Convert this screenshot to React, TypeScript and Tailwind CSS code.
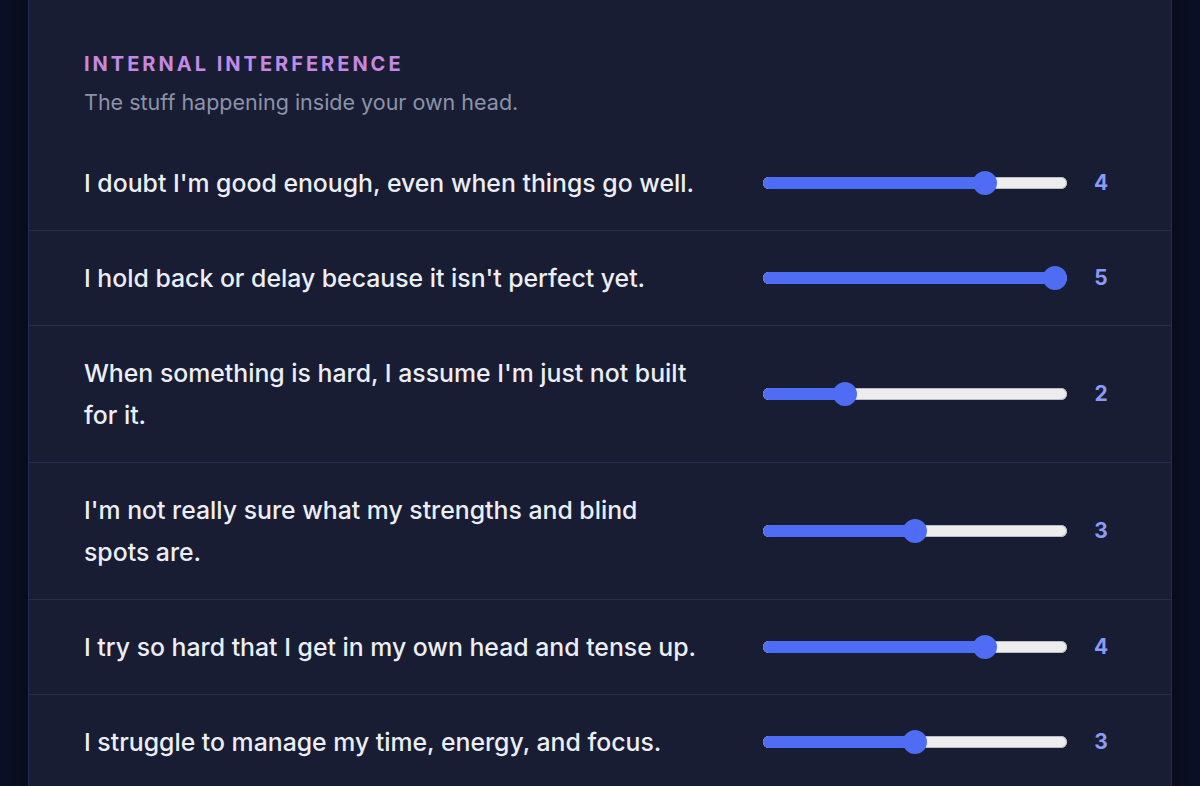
const items = [
  { text: "I doubt I'm good enough, even when things go well.", value: 4 },
  { text: "I hold back or delay because it isn't perfect yet.", value: 5 },
  { text: "When something is hard, I assume I'm just not built for it.", value: 2 },
  { text: "I'm not really sure what my strengths and blind spots are.", value: 3 },
  { text: 'I try so hard that I get in my own head and tense up.', value: 4 },
  { text: 'I struggle to manage my time, energy, and focus.', value: 3 },
]

function Slider({ value }: { value: number }) {
  // thumb travels from 12px to width-12px, like a native range input
  const pct = (value - 1) / 4
  return (
    <div className="relative h-6 w-[304px] shrink-0">
      <div className="absolute left-0 right-0 top-[6px] h-3 rounded-full bg-[#ededed] shadow-[inset_0_0_0_1px_#b9bcc4]" />
      <div
        className="absolute left-0 top-[6px] h-3 rounded-full bg-[#4f6cf4]"
        style={{ width: `calc(12px + ${pct} * (100% - 24px))` }}
      />
      <div
        className="absolute top-0 h-6 w-6 rounded-full bg-[#4f6cf4]"
        style={{ left: `calc(${pct} * (100% - 24px))` }}
      />
    </div>
  )
}

export default function App() {
  return (
    <div
      className="min-h-screen overflow-hidden bg-[#0c1024] px-[28px]"
      style={{ fontFamily: 'Inter, "Noto Sans", sans-serif' }}
    >
      <div className="-mt-[40px] rounded-2xl border border-[#272e4b] bg-[#181d33] pt-[92px] pb-[40px] shadow-[0_0_24px_rgba(0,0,0,0.6)]">
        <div className="px-[55px] pb-[22px]">
          <h2 className="text-[20px] font-bold uppercase leading-[22px] tracking-[0.15em] text-[#c48ae2]">
            Internal Interference
          </h2>
          <p className="mt-[15px] text-[21.5px] leading-[24px] text-[#8c93a9]">
            The stuff happening inside your own head.
          </p>
        </div>
        <div>
          {items.map((item, i) => (
            <div
              key={i}
              className={`flex items-center pl-[55px] pr-[36px] py-[26px] ${i < items.length - 1 ? 'border-b border-[#272e4b]' : ''}`}
            >
              <p className="w-[620px] text-[24.8px] font-medium leading-[42px] text-[#eceef5]">{item.text}</p>
              <div className="ml-auto flex items-center">
                <Slider value={item.value} />
                <span className="w-[68px] text-center text-[21px] font-bold text-[#8b9bf5]">{item.value}</span>
              </div>
            </div>
          ))}
        </div>
      </div>
    </div>
  )
}
